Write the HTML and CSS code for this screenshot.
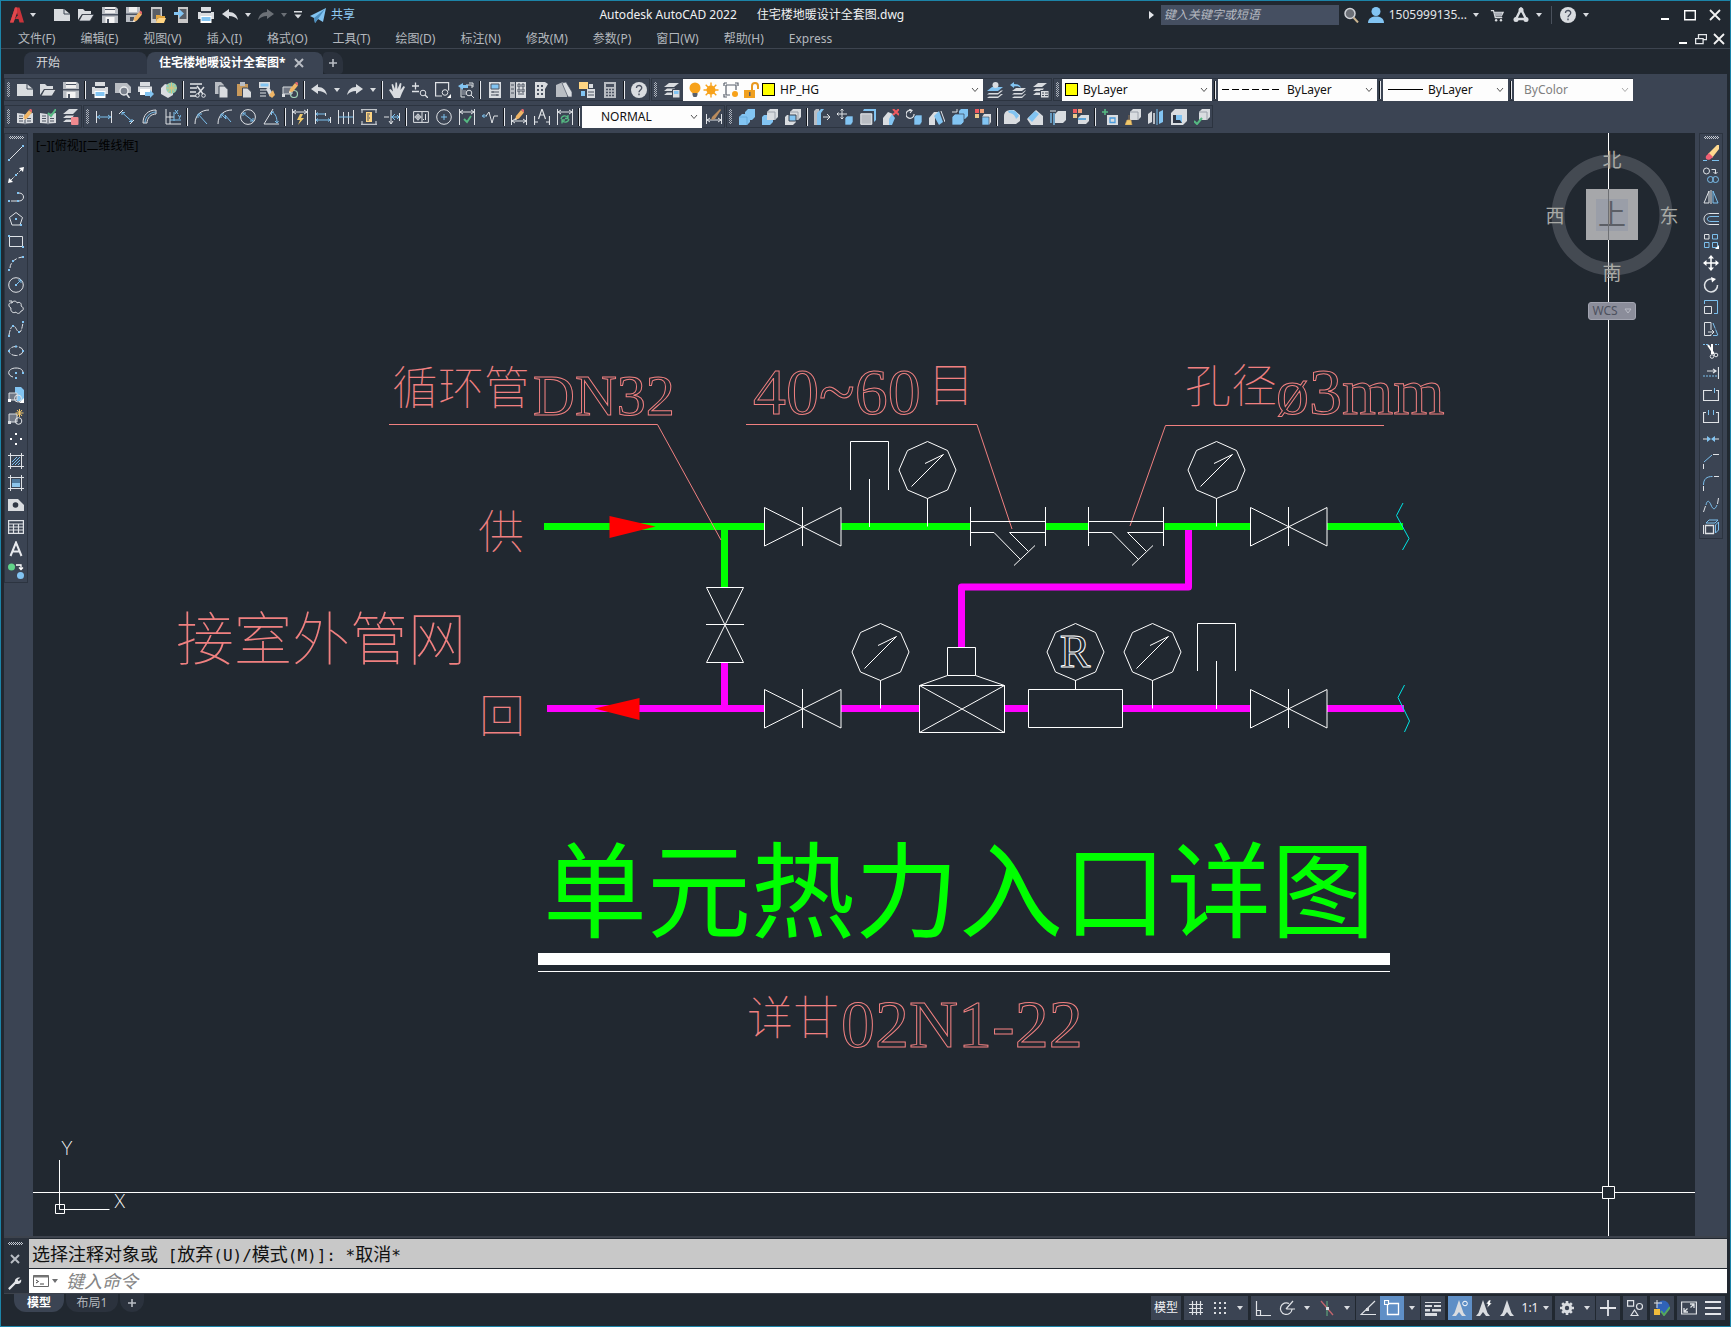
FILE: index.html
```html
<!DOCTYPE html>
<html lang="zh-CN">
<head>
<meta charset="utf-8">
<title>Autodesk AutoCAD 2022 - 住宅楼地暖设计全套图.dwg</title>
<link rel="stylesheet" href="styles.css">
</head>
<body>
<svg class="sprite" aria-hidden="true">
<symbol id="logo" viewBox="0 0 16 16"><path d="M1 15.500 6 .5h4.500L15 15.500h-4.500L9.500 12H6l2-3h.8L8 5.500 4.500 15.500z" fill="#c9343b"/><path d="M1 15.500h3.500L8 5.500V.5H6z" fill="#e0474c"/></symbol>
<symbol id="caret" viewBox="0 0 8 8"><path d="M1 2h6L4 6z" class="fw"/></symbol>
<symbol id="caretbar" viewBox="0 0 10 10"><path d="M1 1h8v1.500H1zM1.500 4.500h7L5 8.500z" class="fw"/></symbol>
<symbol id="chev" viewBox="0 0 8 8"><path d="M1 2l3 3.500L7 2" fill="none" stroke="#555"/></symbol>
<symbol id="new" viewBox="0 0 16 16"><path d="M0 2h10l6 5v7H0z" class="fw"/><path d="M10 2v5h6" stroke="#3b4453" fill="none"/></symbol>
<symbol id="open" viewBox="0 0 16 16"><path d="M0 13V2h5l2 2h6v3H4z" class="fw"/><path d="M4.500 7.500H16L12 14H1z" class="fw" stroke="#2b323d" stroke-width=".7"/></symbol>
<symbol id="save" viewBox="0 0 16 16"><path d="M0 0h14l2 2v14H0z" class="fs"/><path d="M3 0h10v6H3z" fill="#eee"/><path d="M3 2h10v1H3zM0 7h16v1.500H0z" fill="#4a5261"/><path d="M3.500 10h9v6h-9z" fill="#f4f4f4"/><path d="M5 12h2v4H5z" fill="#4a5261"/></symbol>
<symbol id="pencil" viewBox="0 0 16 16"><path d="M7 15l1-4 5-6 3 2.500-5 6z" fill="#f0b566"/><path d="M13 5l1.500-1.500L16 5v2.500z" fill="#e5666c"/><path d="M7 15l.6-2 1.400 1.200z" fill="#fff"/></symbol>
<symbol id="saveas" viewBox="0 0 16 16"><path d="M0 0h14v9l-5 6H0z" class="fs"/><path d="M3 0h8v5H3z" fill="#eee"/><path d="M0 6.500h14V8H0zM4 10h4v4H4z" fill="#4a5261"/><use href="#pencil"/></symbol>
<symbol id="openm" viewBox="0 0 16 16"><path d="M1 0h11v16H1z" fill="#c8c8c8"/><path d="M2.500 2h8v10h-8z" fill="#595e66"/><path d="M6 8h4l1 1h4v2H8l-2 4z" fill="#e2a63f"/><path d="M8.500 11H16l-2 5H6z" fill="#ffd583"/></symbol>
<symbol id="savem" viewBox="0 0 16 16"><path d="M4 0h10v16H4z" fill="#c8c8c8"/><path d="M5.500 2h7v10h-7z" fill="#595e66"/><path d="M0 5h5V2l5 4.500L5 11V8H0z" class="fb"/></symbol>
<symbol id="print" viewBox="0 0 16 16"><path d="M3 0h10v5H3zM0 5h16v7H0z" class="fw"/><path d="M3 4h10v2H3z" fill="#3b4453"/><path d="M2.500 9h11v7h-11z" fill="#fff"/><path d="M3.500 10h9v4h-9z" class="fb"/></symbol>
<symbol id="undo" viewBox="0 0 16 16"><path d="M0 7l7-5v3c5 0 8 3 9 8-3-3-5-4-9-4v3z" class="fw"/></symbol>
<symbol id="redo" viewBox="0 0 16 16"><path d="M16 7L9 2v3c-5 0-8 3-9 8 3-3 5-4 9-4v3z" class="fw"/></symbol>
<symbol id="plane" viewBox="0 0 16 16"><path d="M0 9L16 1l-3 14-5-3-3 4-1-5z" class="fb"/><path d="M4 11l11-9-7 10-3 4z" fill="#4c8fc0"/></symbol>
<symbol id="mag" viewBox="0 0 16 16"><circle cx="7" cy="6.500" r="5" fill="#6b6f76" stroke="#d0d3d8" stroke-width="1.500"/><path d="M10.500 10.500l4.500 5" stroke="#c9b38f" stroke-width="2"/></symbol>
<symbol id="user" viewBox="0 0 16 16"><circle cx="8" cy="4.500" r="4.500" class="fb"/><path d="M0 16c0-5 4-6.500 8-6.500s8 1.500 8 6.500z" class="fb"/></symbol>
<symbol id="cart" viewBox="0 0 16 16"><path d="M1 3h3l2 8h8M5 5h10l-2 4H6" fill="none" stroke="#d9dce0" stroke-width="1.400"/><path d="M5 5h9l-1 4H6z" fill="#a9adb5"/><circle cx="7" cy="14" r="1.400" class="fw"/><circle cx="12.500" cy="14" r="1.400" class="fw"/></symbol>
<symbol id="adsk" viewBox="0 0 16 16"><path d="M8 2l5 10H3z" fill="none" stroke="#d9dce0" stroke-width="2.400"/><circle cx="8" cy="3" r="2.500" class="fw"/><circle cx="3" cy="12.500" r="2.500" class="fw"/><circle cx="13" cy="12.500" r="2.500" class="fw"/></symbol>
<symbol id="help" viewBox="0 0 16 16"><circle cx="8" cy="8" r="8" class="fw"/><path d="M5.500 6c0-3.500 5.500-3.200 5.200 0C10.500 8 8 8 8 10.300M8 11.500v1.700" fill="none" stroke="#4a5160" stroke-width="1.400"/></symbol>
<symbol id="min" viewBox="0 0 12 12"><path d="M2 9h8v2H2z" fill="#fff"/></symbol>
<symbol id="max" viewBox="0 0 12 12"><path d="M.7 1.700h10.600v9H.7z" fill="none" stroke="#fff" stroke-width="1.400"/></symbol>
<symbol id="restore" viewBox="0 0 12 12"><path d="M.6 5.600h7.500v5H.6zM3.500 5V1.600h8v5H8.500" fill="none" stroke="#e4e6e9" stroke-width="1.300"/></symbol>
<symbol id="close" viewBox="0 0 12 12"><path d="M1 1l10 10M11 1L1 11" stroke="#f2f2f2" stroke-width="1.800"/></symbol>
<symbol id="x" viewBox="0 0 10 10"><path d="M1 1l8 8M9 1L1 9" stroke="#b9bdc4" stroke-width="2"/></symbol>
<symbol id="plus" viewBox="0 0 10 10"><path d="M5 1v8M1 5h8" stroke="#b9bdc4" stroke-width="1.600"/></symbol>

<symbol id="preview" viewBox="0 0 16 16"><path d="M0 1h12l4 4v6H0z" class="fs"/><circle cx="9" cy="9" r="4" fill="#79808c" stroke="#eceef0" stroke-width="1.300"/><path d="M11.500 12l3 4" class="w" stroke-width="1.600"/></symbol>
<symbol id="publish" viewBox="0 0 16 16"><path d="M2 0h10v4H2zM0 4.500h14V10H0z" class="fw"/><path d="M2 7h10v6H2z" fill="#fff"/><path d="M7 10h5V8l4 4-4 4v-2H7z" class="fb"/></symbol>
<symbol id="globe" viewBox="0 0 16 16"><path d="M0 6l4-4 8 2v9l-5 3-7-4z" class="fw"/><circle cx="10.500" cy="6" r="5.500" fill="#8ccfb4"/><path d="M10.500 .5v11M5 6h11M7 2c3 3 3 5 0 8M14 2c-3 3-3 5 0 8" fill="none" stroke="#e0c27a" stroke-width=".9"/></symbol>
<symbol id="cut" viewBox="0 0 16 16"><path d="M0 1h12v2H0zM0 5h7v2H0zM0 9h6v2H0zM0 13h6v2H0z" class="fs"/><path d="M7 4l6 8M14 5l-6 7" class="w" stroke-width="1.500"/><circle cx="7.500" cy="13.500" r="1.800" class="w"/><circle cx="13.500" cy="13.500" r="1.800" class="w"/></symbol>
<symbol id="copy" viewBox="0 0 16 16"><path d="M2 0h6l3 3v9H2z" class="fs"/><path d="M6 4h5.500L15 7.500V16H6z" class="fw" stroke="#3b4453"/></symbol>
<symbol id="paste" viewBox="0 0 16 16"><path d="M1 2h11v12H1z" fill="#c99a5b"/><path d="M4 0h5v4H4z" class="fs"/><path d="M6.500 6h5l4 4v6h-9z" class="fw" stroke="#3b4453"/></symbol>
<symbol id="match" viewBox="0 0 16 16"><path d="M0 0h11v6H0z" class="fw"/><path d="M1.500 1.500h8v3h-8z" class="fb"/><path d="M1 8h7M1 11h6M1 14h6" class="w"/><path d="M7 7l3-2 4 7-3 3z" class="fw"/><path d="M10 13l4-5 2 5-3 3z" fill="#f0b566"/></symbol>
<symbol id="bedit" viewBox="0 0 16 16"><path d="M1 5h9v7H1z" fill="#717885" stroke="#d9dce0"/><circle cx="12" cy="12" r="3.500" fill="none" stroke="#9fd0b5" stroke-width="1.200"/><path d="M0 12h3v3H0z" class="fw"/><g transform="translate(0 -4)"><use href="#pencil"/></g></symbol>
<symbol id="hand" viewBox="0 0 16 16"><path d="M5 16L0 8l1.500-1L4 9.500 2.500 2.500 4 2l2 5L6.500 .5H8L8.500 7 11 1l1.500.5-1 6.500L14.500 4l1.500 1-3 6-2 5z" class="fw"/></symbol>
<symbol id="zoomrt" viewBox="0 0 16 16"><path d="M0 4h7M3.500 .5v7M0 9.500h7" class="w" stroke-width="1.300"/><circle cx="11" cy="11" r="2.800" class="w"/><path d="M13 13l3 3" class="w" stroke-width="1.300"/></symbol>
<symbol id="zoomw" viewBox="0 0 16 16"><path d="M7 14H.6V.6h13v8" class="w" stroke-width="1.200"/><circle cx="10" cy="10.500" r="2.800" class="w"/><path d="M16 12v4h-4z" fill="#fff"/></symbol>
<symbol id="zoomp" viewBox="0 0 16 16"><path d="M3 6v9h4M8 3h6v3" class="w"/><path d="M0 4l5-3v2h5v3H5v2z" class="fb"/><path d="M4 8h4v5H4z" fill="#717885"/><circle cx="11" cy="11" r="2.800" class="w"/><path d="M13 13l3 3M11 1h4v4" class="w"/></symbol>
<symbol id="props" viewBox="0 0 16 16"><path d="M2 0h12v16H2z" class="fw"/><path d="M4 2h8v5H4z" class="fb" stroke="#4a5261"/><path d="M4 10h8M4 13h8M6 9v2M10 12v2" stroke="#4a5261"/></symbol>
<symbol id="dcenter" viewBox="0 0 16 16"><path d="M0 0h5v16H0z" class="fs"/><path d="M6 0h10v16H6z" class="fw"/><path d="M8 2h2v3H8zM12 2h2v3h-2zM8 7h2v3H8zM12 7h2v3h-2zM8 12h6M1 3h3M1 7h3M1 11h3" class="d"/></symbol>
<symbol id="palette" viewBox="0 0 16 16"><path d="M2 0h10l3 2-3 5v9H2z" class="fw"/><path d="M4 3h2v2H4zM8 3h2v2H8zM4 7h2v2H4zM8 7h2v2H8zM4 11h2v2H4zM8 11h2v2H8z" fill="#4a5261"/></symbol>
<symbol id="sheets" viewBox="0 0 16 16"><path d="M0 3l7-3 4 11v4H0z" class="fs"/><path d="M6 1l4-1 6 10v5h-4z" class="fw" stroke="#4a5261" stroke-width=".7"/></symbol>
<symbol id="markup" viewBox="0 0 16 16"><path d="M0 0h9v7H0z" fill="#ffd583"/><path d="M2 9h4v5H2z" class="fb"/><path d="M8 7h8v9H8zM10 2h4v4h-4z" class="fw"/><path d="M9 10h6M9 13h6" class="d"/></symbol>
<symbol id="calc" viewBox="0 0 16 16"><path d="M2 0h12v16H2z" class="fs"/><path d="M4 2h8v3H4z" fill="#4a5261"/><path d="M4 7.500h8M4 10.500h8M4 13.500h8" stroke="#4a5261" stroke-width="1.600" stroke-dasharray="2 1"/></symbol>
<symbol id="layers" viewBox="0 0 16 16"><path d="M0 5l5-4h10l-5 4zM0 9l3-2.500h8L9 9zM0 13l3-2.500h5V13z" class="fw"/><path d="M8.500 7.500H16V16H8.500z" class="fw" stroke="#3b4453"/><path d="M10 9h4.500v3H10z" class="fb"/></symbol>
<symbol id="bulb" viewBox="0 0 16 16"><circle cx="8" cy="6" r="5.500" fill="#f7a21b"/><path d="M5.500 11h5v2l-1 2h-3l-1-2z" fill="#59606c"/></symbol>
<symbol id="sun" viewBox="0 0 16 16"><circle cx="8" cy="8" r="4.500" fill="#f7a21b"/><path d="M8 .5v15M.5 8h15M2.700 2.700l10.600 10.600M13.300 2.700L2.700 13.300" stroke="#f7a21b" stroke-width="1.400"/></symbol>
<symbol id="vpfrz" viewBox="0 0 16 16"><path d="M3 3h10v5M3 3v10h4M1 1h3M1 1v3M12 1h3v3M1 12v3h3" fill="none" stroke="#59606c" stroke-width="1.200"/><circle cx="12" cy="12" r="3" fill="#f7a21b"/></symbol>
<symbol id="unlock" viewBox="0 0 16 16"><path d="M9 8V4c0-4 6-4 6 0v3" fill="none" stroke="#e8981e" stroke-width="2"/><path d="M1 8h11v8H1z" fill="#f0a020"/><path d="M6 10h1.500v4H6z" fill="#59606c"/></symbol>
<symbol id="laycur" viewBox="0 0 16 16"><path d="M0 9l5-4h11l-5 4z" class="fb"/><path d="M0 12.500l2-1.500h9l3-2.500h2l-5 4zM0 16l2-1.500h9l3-2.500h2L11 16z" class="fw"/><circle cx="8.500" cy="3" r="3" class="fw"/></symbol>
<symbol id="layprev" viewBox="0 0 16 16"><path d="M2 9l4-3h10l-4 3zM2 12.500l2-1.500h8l3-2.500h1l-4 4zM2 16l2-1.500h8l3-2.500h1l-4 4z" class="fw"/><path d="M0 3l4-3v2c4 0 6 1 7 4-2-2-4-2-7-1.500V6z" class="fb"/></symbol>
<symbol id="laystate" viewBox="0 0 16 16"><path d="M0 5l5-4h9l-5 4zM0 9l3-2.500h8L9 9zM0 13l3-2.500h4V13z" class="fw"/><path d="M7.500 8.500H16V16H7.500z" class="fw" stroke="#3b4453"/><path d="M9 11h2M12 11h3M9 13.500h2M12 13.500h3" class="d"/></symbol>

<symbol id="book" viewBox="0 0 16 16"><path d="M0 4l7 1 1 1 1-1 7-1v10l-7 .5-1 1-1-1-7-.5z" class="fw"/><path d="M8 6v9M2 7h4M2 9.500h4M2 12h4M10 9.500h4M10 12h4" class="d"/></symbol>
<symbol id="bookedit" viewBox="0 0 16 16"><use href="#book"/><g transform="translate(-1 -4)"><use href="#pencil"/></g></symbol>
<symbol id="bookok" viewBox="0 0 16 16"><use href="#book"/><path d="M8 4l3 3 5-7" fill="none" stroke="#55b982" stroke-width="2"/></symbol>
<symbol id="layerdel" viewBox="0 0 16 16"><path d="M0 5l6-5h9l-5 5zM0 9l3-2.500h8L9 9zM0 13l3-2.500h5V13z" class="fw"/><rect x="8" y="8" width="7.500" height="8" rx="1" fill="#f08a8f"/></symbol>
<symbol id="dlin" viewBox="0 0 16 16"><path d="M.5 2v12M15.500 2v12" class="w"/><path d="M1 8h14M4 6L1.500 8 4 10M12 6l2.500 2-2.500 2" class="b"/></symbol>
<symbol id="dali" viewBox="0 0 16 16"><path d="M0 5l4-4M11 15l4-4" class="w"/><path d="M3 3.500l10 9M3 6V3.500h3M13 10v2.500h-3" class="b"/></symbol>
<symbol id="darc" viewBox="0 0 16 16"><path d="M5 14C5 9 9 5 14 5V1C6 1 1 6 1 14z" class="w"/><path d="M3 14C3 8 8 3 14 3" class="b"/></symbol>
<symbol id="dord" viewBox="0 0 16 16"><path d="M1 0v15h15M1 8h8M5 3v12" class="w"/><path d="M5 11h11M9 3v9M10 1l3 4M13 1l-3 4M13 6l1.500 2M16 6l-2 4" class="b"/></symbol>
<symbol id="drad" viewBox="0 0 16 16"><path d="M15 1C7 1 1 6 1 15" class="w"/><path d="M4 5l9 10M4 9V5h4" class="b"/></symbol>
<symbol id="djog" viewBox="0 0 16 16"><path d="M15 1C7 1 1 6 1 15" class="w"/><path d="M4 5l5 5-1-4 6 7M4 9V5h3" class="b"/></symbol>
<symbol id="ddia" viewBox="0 0 16 16"><circle cx="8" cy="8" r="7.400" class="w"/><path d="M3 4l10 8M3 7V4h3M13 9v3h-3" class="b"/></symbol>
<symbol id="dang" viewBox="0 0 16 16"><path d="M10 0L1 15h15" class="w"/><path d="M9 3c4 2 5 6 5 11M12 12l2 2 1.500-2M11 3H8.500v3" class="b"/></symbol>
<symbol id="dquick" viewBox="0 0 16 16"><path d="M.5 0v16M15.500 0v16M1 3h14M4 1L1 3l3 2M12 1l3 2-3 2" class="w"/><path d="M8 5L5 11h3l-2 5 6-7H9l2-4z" fill="#f0c96a"/></symbol>
<symbol id="dbase" viewBox="0 0 16 16"><path d="M.5 1v14M10.500 4v3M15.500 8v6" class="w"/><path d="M1 5h9M1 11h14M3 3.500L1 5l2 1.500M3 9.500L1 11l2 1.500M13 9.500l2 1.500-2 1.500" class="b"/></symbol>
<symbol id="dcont" viewBox="0 0 16 16"><path d="M.5 1v14M5.500 3v12M10.500 3v12M15.500 1v14" class="w"/><path d="M1 8h14" class="b"/></symbol>
<symbol id="dspace" viewBox="0 0 16 16"><path d="M0 .7h16M0 15.300h16M1 4V1M15 4V1M1 12v3M15 12v3" class="w"/><path d="M5 3h6v10H5z" fill="#ffd583"/><path d="M6 5h3M6 7h2M6 9h3M6 11h2" stroke="#4a5261"/></symbol>
<symbol id="dbreak" viewBox="0 0 16 16"><path d="M0 8h5M7 1v14M5 12l2 3 2-3M15.500 4v8" class="w"/><path d="M7 8h8M11 5l-3 3 3 3M13 6l2 2-2 2" class="b"/></symbol>
<symbol id="tol" viewBox="0 0 16 16"><path d="M.6 2.600h14.800v10.800H.6zM9 3v10" class="w"/><circle cx="5" cy="8" r="2.300" class="w"/><path d="M5 4.500v7M1.500 8h7M12.500 5v6M10.500 10v1" class="w"/></symbol>
<symbol id="cmark" viewBox="0 0 16 16"><circle cx="8" cy="8" r="7.300" class="w"/><path d="M8 5v6M5 8h6" class="b"/></symbol>
<symbol id="dinsp" viewBox="0 0 16 16"><path d="M.5 0v16M15.500 0v16M1 3h14M4 1L1 3l3 2M12 1l3 2-3 2" class="w"/><path d="M5 10l3 3 4-6" fill="none" stroke="#55b982" stroke-width="1.800"/></symbol>
<symbol id="jogl" viewBox="0 0 16 16"><path d="M0 7h5M2.500 5L.5 7l2 2" class="b"/><path d="M4 7l3-4 3 11 2-7h4" class="w"/></symbol>
<symbol id="dedit" viewBox="0 0 16 16"><path d="M.5 6v10M15.500 6v10M1 12h14M4 10l-3 2 3 2M12 10l3 2-3 2" class="w"/><g transform="translate(-3 -4)"><use href="#pencil"/></g></symbol>
<symbol id="dtext" viewBox="0 0 16 16"><path d="M.5 7v9M15.500 7v9M1 13h3M12 13h3M4.500 10L8 0l3.500 10M6 6h4" class="w" stroke-width="1.200"/></symbol>
<symbol id="dupd" viewBox="0 0 16 16"><path d="M.5 0v16M15.500 0v16M1 3h14M4 1L1 3l3 2M12 1l3 2-3 2" class="w"/><path d="M4 10c1-4 6-4 7-1M12 10c-1 4-6 4-7 1M11 6v3.500H8M5 14.500V11h3" fill="none" stroke="#55b982" stroke-width="1.300"/></symbol>
<symbol id="dstyle" viewBox="0 0 16 16"><path d="M.5 5v10M15.500 5v10M1 11h14M4 9l-3 2 3 2M12 9l3 2-3 2" class="w"/><path d="M6 8l8-8 1 1-6 9-4 1z" fill="#b98b5d"/></symbol>

<symbol id="cubeg" viewBox="0 0 16 16"><path d="M5 3l3-3h8v8l-3 3H5z" class="fw"/><path d="M5 3h8v8" fill="none" stroke="#9aa0aa"/></symbol>
<symbol id="union" viewBox="0 0 16 16"><path d="M0 8l3-3h3V3l3-3h7v8l-3 3h-2v2l-3 3H0z" class="fb"/><path d="M0 8h8v8" fill="none" stroke="#5fa4d6" stroke-width=".8"/></symbol>
<symbol id="subtract" viewBox="0 0 16 16"><use href="#cubeg"/><path d="M0 8l2-2h3v5h6v2l-3 3H0z" class="fb"/></symbol>
<symbol id="intersect" viewBox="0 0 16 16"><use href="#cubeg"/><path d="M0 8l2-2h9v7l-3 3H0z" class="fw"/><path d="M4 6h7v6H4z" class="fb" stroke="#3b4453"/></symbol>
<symbol id="extrudef" viewBox="0 0 16 16"><path d="M0 2l2-2h3v14l-2 2H0z" class="fs"/><path d="M3 4l4-4h3L7 4v12H3z" class="fb"/><path d="M9 8h7M13 5l3 3-3 3" class="w"/></symbol>
<symbol id="movef" viewBox="0 0 16 16"><path d="M5 0v10M0 5h10M3.500 1.500L5 0l1.500 1.500M3.500 8.500L5 10l1.500-1.500M1.500 3.500L0 5l1.500 1.500" class="w"/><path d="M8 9l2-2h6v6l-2 3H8z" class="fb" stroke="#3b4453" stroke-width=".6"/></symbol>
<symbol id="offsetf" viewBox="0 0 16 16"><path d="M4 0h12v11l-2 2V2H3z" class="fb"/><path d="M.8 4.800h11v10.500H.8z" class="fs" stroke="#eceef0"/></symbol>
<symbol id="delf" viewBox="0 0 16 16"><path d="M0 16V9l5-6 5 2-4 6v5z" class="fw"/><path d="M6 10l3-5 3 4-3 7H6z" class="fb"/><path d="M10 0l6 6M16 0l-6 6" stroke="#ef5a60" stroke-width="2"/></symbol>
<symbol id="rotf" viewBox="0 0 16 16"><path d="M8 5A4 4 0 1 1 5 1.500M3 0l3 1.500L4 4" class="w" stroke-width="1.200"/><path d="M8 8l2-2h6v7l-2 3H8z" class="fb" stroke="#3b4453" stroke-width=".6"/></symbol>
<symbol id="taperf" viewBox="0 0 16 16"><path d="M0 16V9l5-6h5L6 9v7z" class="fw"/><path d="M5 7l5-5 4 11-4 3z" class="fb"/><path d="M12 2l4 11" class="w"/></symbol>
<symbol id="copyf" viewBox="0 0 16 16"><path d="M7 2l2-2h7v7l-3 3H7z" class="fb"/><path d="M0 8l3-3h9v8l-3 3H0z" class="fb" stroke="#3b4453" stroke-width=".7"/><path d="M0 3h5V0" class="w"/></symbol>
<symbol id="colorf" viewBox="0 0 16 16"><path d="M0 0h4v4H0z" fill="#ef5a60"/><path d="M5 0h4v4H5z" fill="#efa079"/><path d="M0 5h4v4H0z" fill="#e9c98b"/><path d="M7 8l2-3h7v8l-2 3H7z" class="fw"/><path d="M7 8h7v8H7z" class="fb" stroke="#3b4453" stroke-width=".6"/></symbol>
<symbol id="fillete" viewBox="0 0 16 16"><path d="M0 15V7c0-4 3-6 7-6h3l6 5v6l-4 3z" class="fw"/><path d="M4 2c5-2 9 1 11 5l-3 3C11 6 8 4 5 4z" class="fb"/></symbol>
<symbol id="chamfe" viewBox="0 0 16 16"><path d="M0 10L9 1l7 6v9H4z" class="fw"/><path d="M1 9l7-7 4 3-7 8z" class="fb"/></symbol>
<symbol id="copye" viewBox="0 0 16 16"><path d="M5 5l3-3h8v9l-3 3H5z" class="fw"/><path d="M4 4v12M1 4v10" class="b" stroke-width="1.400"/><path d="M0 2h6" class="w"/></symbol>
<symbol id="colore" viewBox="0 0 16 16"><path d="M0 0h4v4H0z" fill="#ef5a60"/><path d="M5 0h4v4H5z" fill="#efa079"/><path d="M0 5h4v4H0z" fill="#e9c98b"/><path d="M5 9l3-3h8v6l-3 3H5z" class="fw"/><path d="M5 10h8" stroke="#5fa4d6" stroke-width="2"/></symbol>
<symbol id="imprint" viewBox="0 0 16 16"><path d="M3 0v6M0 3h6" stroke="#55b982" stroke-width="1.600"/><path d="M5 6h11v10H5z" class="fw"/><path d="M8 9h5v4.500H8z" class="fw" stroke="#4a9bdc" stroke-width="1.300"/></symbol>
<symbol id="clean" viewBox="0 0 16 16"><use href="#cubeg"/><path d="M4 6v5M0 16l2-5h4l1 5z" fill="#f0c96a" stroke="#c99a5b" stroke-width=".6"/></symbol>
<symbol id="separate" viewBox="0 0 16 16"><path d="M0 5l4-3v11l-4 2z" class="fw"/><path d="M11 3l4-2v12l-4 2z" class="fb"/><path d="M5 4h2v11H5z" class="fs"/><path d="M9 0v16" class="b"/></symbol>
<symbol id="shell" viewBox="0 0 16 16"><path d="M0 4l4-4h12v12l-4 4H0z" class="fw"/><path d="M2 6h9v8H2z" fill="#2f3745"/><path d="M5 6h6v8l-2-3H5z" class="fb"/></symbol>
<symbol id="check3d" viewBox="0 0 16 16"><use href="#cubeg"/><path d="M0 12l3 3 5-6" fill="none" stroke="#55b982" stroke-width="2"/></symbol>

<symbol id="line" viewBox="0 0 16 16"><path d="M1.500 14.500l13-13" class="w"/><path d="M0 14h2v2H0zM14 0h2v2h-2z" class="fb"/></symbol>
<symbol id="xline" viewBox="0 0 16 16"><path d="M2 14L14 2" class="w" stroke-dasharray="5 1.500"/><path d="M0 16l1-5 4 4zM16 0l-5 1 4 4z" fill="#fff"/><path d="M7 7h2v2H7z" class="fb"/></symbol>
<symbol id="pline" viewBox="0 0 16 16"><path d="M3 12h6M11 4c6 0 6 8 0 8" class="w"/><path d="M0 11h2v2H0zM9 11h2v2H9zM9 3h2v2H9z" class="fb"/></symbol>
<symbol id="polygon" viewBox="0 0 16 16"><path d="M8 1.500l6.500 5L12 14H4L1.500 6.500z" class="w"/><path d="M7 7h2v2H7zM12 13h2v2h-2z" class="fb"/></symbol>
<symbol id="rect" viewBox="0 0 16 16"><path d="M1.500 3.500h13v10h-13z" class="w"/><path d="M0 2h2v2H0zM14 13h2v2h-2z" class="fb"/></symbol>
<symbol id="arc" viewBox="0 0 16 16"><path d="M2 13c0-5 5-10 12-11" class="w" stroke-dasharray="5 2"/><path d="M0 14h2v2H0zM4 5h2v2H4zM14 1h2v2h-2z" class="fb"/></symbol>
<symbol id="circle" viewBox="0 0 16 16"><circle cx="8" cy="8" r="7.300" class="w"/><path d="M9 7l4-4M10 3h3v3" class="b"/><path d="M7 7h2v2H7z" class="fb"/></symbol>
<symbol id="cloud" viewBox="0 0 16 16"><path d="M3 9C0 8 0 3 4 4c1-3 5-2 5 0 3-2 5 1 4 3 3 1 3 5 0 5-1 3-4 3-5 1-3 2-6-1-5-4zM1 2h3v2" class="w"/></symbol>
<symbol id="spline" viewBox="0 0 16 16"><path d="M1 14C2 8 4 4 6 5s4 8 6 6 2-5 3-9" class="w" stroke-dasharray="5 1"/><path d="M0 14h2v2H0zM4 4h2v2H4zM10 10h2v2h-2zM14 0h2v2h-2z" class="fb"/></symbol>
<symbol id="ellipse" viewBox="0 0 16 16"><ellipse cx="8" cy="8" rx="7" ry="4.500" class="w" stroke-dasharray="6 1.500"/><path d="M0 7h2v2H0zM14 7h2v2h-2zM7 2.500h2v2H7z" class="fb"/></symbol>
<symbol id="ellarc" viewBox="0 0 16 16"><path d="M5 12C-2 10 0 3 8 3c5 0 7 2 7 5" class="w"/><path d="M7 7h2v2H7zM7 12h2v2H7zM14 7h2v2h-2z" class="fb"/></symbol>
<symbol id="insert" viewBox="0 0 16 16"><path d="M7 0h6l3 3v11H9V8H7z" class="fb"/><path d="M1 6h8v7H1z" fill="#717885" stroke="#d9dce0"/><circle cx="10" cy="11.500" r="3.500" class="w"/><path d="M0 12h3v3H0zM16 11v5h-5z" fill="#fff"/></symbol>
<symbol id="block" viewBox="0 0 16 16"><path d="M1 5h8v8H1z" fill="#717885" stroke="#d9dce0"/><circle cx="10.500" cy="12" r="3.300" class="w"/><path d="M0 12h3v3H0z" class="fw"/><path d="M11.500 0v8M7.500 4h8M9 1l5 6M14 1L9 7" stroke="#f5c96d"/></symbol>
<symbol id="point" viewBox="0 0 16 16"><path d="M7 2h2v2H7zM2 7h2v2H2zM12 7h2v2h-2zM7 12h2v2H7z" fill="#fff"/></symbol>
<symbol id="hatch" viewBox="0 0 16 16"><path d="M2.500 0v16M13.500 0v16M0 2.500h16M0 13.500h16" class="w"/><path d="M4 9l5-5M4 12l8-8M7 12l5-5M10 12l2-2" class="b"/></symbol>
<symbol id="gradient" viewBox="0 0 16 16"><path d="M4 4h8v4H4z" fill="#4f799c"/><path d="M4 8h8v4H4z" fill="#8cc4ea"/><path d="M2.500 0v16M13.500 0v16M0 2.500h16M0 13.500h16" class="w"/></symbol>
<symbol id="region" viewBox="0 0 16 16"><path d="M0 2h10l6 6v6H0z" class="fw"/><circle cx="7.500" cy="8" r="2.800" fill="#2f3745"/></symbol>
<symbol id="table" viewBox="0 0 16 16"><path d="M.6 1.600h14.800v12.800H.6zM1 5h14M1 8h14M1 11h14M5.500 5v9M10.500 5v9" class="w" stroke-width="1.200"/></symbol>
<symbol id="mtext" viewBox="0 0 16 16"><path d="M2.500 15L8 1.500 13.500 15M4.500 10.500h7" fill="none" stroke="#e8eaee" stroke-width="2"/></symbol>
<symbol id="addsel" viewBox="0 0 16 16"><circle cx="3.500" cy="4" r="3.500" fill="#62d58a"/><circle cx="12.500" cy="12.500" r="3.500" class="fb"/><path d="M8 2h5v4M11 4.500l2 2 2-2" stroke="#fff" fill="none" stroke-width="1.300"/></symbol>

<symbol id="erase" viewBox="0 0 16 16"><path d="M5 9l9-9h2v4l-7 9z" fill="#ffd98f"/><path d="M3 11l3-3 4 4-3 2.500c-3 1-5-.5-4-3.500z" fill="#ef5f74"/><path d="M0 15.500h4M9 15.500h7" class="b"/></symbol>
<symbol id="copyobj" viewBox="0 0 16 16"><circle cx="3.500" cy="4" r="3" class="w"/><circle cx="7.500" cy="12.500" r="3" class="b"/><circle cx="12.500" cy="12.500" r="3" class="b"/><path d="M8.500 2.500h4v4M10.500 5l2 2 2-2" class="w"/></symbol>
<symbol id="mirror" viewBox="0 0 16 16"><path d="M6 2v12H1z" class="w"/><path d="M10 2v12h5z" class="b"/><path d="M8 1v14" class="w"/></symbol>
<symbol id="offset" viewBox="0 0 16 16"><path d="M16 2.500H7c-8 0-8 11 0 11h9" class="w"/><path d="M16 5.500H8c-5 0-5 5 0 5h8" class="b"/></symbol>
<symbol id="array" viewBox="0 0 16 16"><path d="M1.500 1.500h4.500v4.500H1.500z" class="w"/><path d="M9.500 1.500h5v4.500h-5zM1.500 9.500h4.500v5H1.500zM9.500 9.500h5v5h-5z" class="b"/><path d="M16 12v4h-4z" fill="#fff"/></symbol>
<symbol id="move" viewBox="0 0 16 16"><path d="M8 1v14M1 8h14" stroke="#fff" stroke-width="1.500"/><path d="M8 0l3 3.500H5zM8 16l3-3.500H5zM0 8l3.500-3v6zM16 8l-3.500-3v6z" fill="#fff"/></symbol>
<symbol id="rotate" viewBox="0 0 16 16"><path d="M9 2A6.500 6.500 0 1 0 14.500 8" class="w" stroke-width="1.500"/><path d="M8 0l5 2-4 3.500z" fill="#fff"/></symbol>
<symbol id="scale" viewBox="0 0 16 16"><path d="M1.500 7.500h7v7h-7z" class="w"/><path d="M1.500 5V1.500h13v13H11" class="b"/></symbol>
<symbol id="stretch" viewBox="0 0 16 16"><path d="M8 9V1.500H1.500v13H8V13M5 11h6M9 9l2 2-2 2" class="w"/><path d="M10 2l5 12.500h-5" class="b" stroke-dasharray="6 1"/></symbol>
<symbol id="trim" viewBox="0 0 16 16"><path d="M0 1.500h5M12 1.500h4" class="b" stroke-dasharray="2 1"/><path d="M5 2l6 9M9 1l0 10" stroke="#fff" stroke-width="2"/><circle cx="9" cy="13.500" r="1.800" class="w"/><circle cx="13" cy="12" r="1.800" class="w"/></symbol>
<symbol id="extend" viewBox="0 0 16 16"><path d="M15.500 2v12M4 6h9M10 4l3 2-3 2" class="w" stroke-width="1.200"/><path d="M0 11h14" class="b" stroke-dasharray="2 1"/></symbol>
<symbol id="breakpt" viewBox="0 0 16 16"><path d="M9 3.500H.5v10h15v-10H13" class="w" stroke-width="1.200"/><path d="M11.500 1v5" class="b"/></symbol>
<symbol id="break" viewBox="0 0 16 16"><path d="M3 3.500H.5v10h15v-10H13" class="w" stroke-width="1.200"/><path d="M5.500 1v5M10.500 1v5" class="b"/></symbol>
<symbol id="join" viewBox="0 0 16 16"><path d="M0 8h5M11 8h5" class="w"/><path d="M4 5l4 3-4 3zM12 5L8 8l4 3z" class="fb"/></symbol>
<symbol id="chamfer" viewBox="0 0 16 16"><path d="M.5 16v-5M10 1.500h6" class="w"/><path d="M1 9l8-7" class="b"/></symbol>
<symbol id="fillet" viewBox="0 0 16 16"><path d="M.5 16v-5M11 1.500h5" class="w"/><path d="M.5 10c0-6 3-8.500 9-8.500" class="b"/></symbol>
<symbol id="blend" viewBox="0 0 16 16"><path d="M.5 15l2-6M15.500 1l-1 6" class="w"/><path d="M3 8c1-5 3-5 5 0s4 5 6 0" class="b"/></symbol>
<symbol id="explode" viewBox="0 0 16 16"><path d="M2.500 6.500h8v8h-8z" class="w" stroke-width="1.300"/><path d="M3 4l3-3h9l-3 3zM12.500 6l3-3v8l-3 3z" class="b"/><path d="M.5 6v9" class="w"/></symbol>

<symbol id="wrench" viewBox="0 0 16 16"><path d="M1 15l8-8" stroke="#e4e6ea" stroke-width="2.500"/><path d="M8 8c-1-4 2-7 6-6l-3 2 1 2 3-2c1 4-3 6-6 5z" fill="#e4e6ea"/></symbol>
<symbol id="prompt" viewBox="0 0 16 12"><path d="M.5 .5h15v11H.5z" fill="#fff" stroke="#666"/><path d="M.5 .5h15v2H.5z" fill="#777"/><path d="M3 5l2.500 1.500L3 8M7 9h4" fill="none" stroke="#444"/></symbol>
<symbol id="grid" viewBox="0 0 16 16"><path d="M4.500 1v14M8.500 1v14M12.500 1v14M1 4.500h14M1 8.500h14M1 12.500h14" class="w" stroke-width="1.200"/></symbol>
<symbol id="snap" viewBox="0 0 16 16"><path d="M2 2h2v2H2zM7 2h2v2H7zM12 2h2v2h-2zM2 7h2v2H2zM7 7h2v2H7zM12 7h2v2h-2zM2 12h2v2H2zM7 12h2v2H7zM12 12h2v2h-2z" class="fw"/></symbol>
<symbol id="ortho" viewBox="0 0 16 16"><path d="M1.500 1v14.500H16M1.500 10.500h4v5" class="w" stroke-width="1.200"/></symbol>
<symbol id="polar" viewBox="0 0 16 16"><path d="M13 9.500A5.800 5.800 0 1 1 10 3.500M7 9h9M7 9l7-8" class="w" stroke-width="1.200"/></symbol>
<symbol id="iso" viewBox="0 0 16 16"><path d="M8 1v15" stroke="#65b383"/><path d="M2 1l12 14" stroke="#c2656d" stroke-width="1.300"/><path d="M7 7h3v3H7z" class="fw"/></symbol>
<symbol id="otrack" viewBox="0 0 16 16"><path d="M15 1L1 14.500h15" class="w" stroke-width="1.200"/><path d="M6 8h3v3H6z" class="fw"/></symbol>
<symbol id="osnap" viewBox="0 0 16 16"><path d="M3 3.500h11.500v11H3.500V3" fill="none" stroke="#fff" stroke-width="1.300"/><path d="M.5 .5h4v4h-4z" fill="#6492c4" stroke="#fff" stroke-width="1.200"/></symbol>
<symbol id="lweight" viewBox="0 0 16 16"><path d="M0 2h16v1H0zM0 5h7v2H0zM9 5h7v2H9zM0 9h5v2.500H0zM7 9h9v2.500H7zM0 13h12v3H0z" class="fw"/></symbol>
<symbol id="anno" viewBox="0 0 16 16"><path d="M7 0l4.500 13 2.500 3h-4L7 12l-3 4H0l2.500-3z" class="fw"/></symbol>
<symbol id="annovis" viewBox="0 0 16 16"><use href="#anno"/><circle cx="13" cy="3.500" r="2.300" fill="none" stroke="#fff"/></symbol>
<symbol id="annoauto" viewBox="0 0 16 16"><use href="#anno"/><path d="M13 0l-3 4h2l-1 4 5-5h-2l1-3z" fill="#fff" stroke="#3b4453" stroke-width=".5"/></symbol>
<symbol id="gear" viewBox="0 0 16 16"><circle cx="8" cy="8" r="4.200" fill="none" stroke="#d9dce0" stroke-width="3.400"/><path d="M8 0v3M8 13v3M0 8h3M13 8h3M2.500 2.500l2 2M11.500 11.500l2 2M13.500 2.500l-2 2M4.500 11.500l-2 2" stroke="#d9dce0" stroke-width="3"/></symbol>
<symbol id="monitor" viewBox="0 0 16 16"><path d="M8 0v16M0 8h16" stroke="#e4e6ea" stroke-width="1.800"/></symbol>
<symbol id="isolate" viewBox="0 0 16 16"><path d="M.6 .6h6v5.500h-6zM7.500 10l3.500 5.500H4z" class="w" stroke-width="1.200"/><circle cx="12.500" cy="6.500" r="3" class="w" stroke-width="1.200"/></symbol>
<symbol id="perf" viewBox="0 0 16 16"><circle cx="9" cy="7" r="6.500" fill="#2f63b8"/><path d="M3 0v8M0 3h8" class="w"/><path d="M0 9h6v6H0z" fill="#f0bb3c"/><path d="M7 11l3 4 6-8" fill="none" stroke="#56a85c" stroke-width="2"/></symbol>
<symbol id="full" viewBox="0 0 16 16"><path d="M.6 2h14.800v12H.6z" class="w" stroke-width="1.200"/><path d="M9 4h4v4M3 8v4h4M13 4L9.500 7.500M3 12l3.500-3.500" class="w" stroke-width="1.300"/></symbol>
<symbol id="burger" viewBox="0 0 16 16"><path d="M0 2h16M0 8h16M0 14h16" stroke="#e4e6ea" stroke-width="2"/></symbol>

<symbol id="valve" viewBox="0 0 78 40" overflow="visible"><path d="M.5.5L77 39V.5L.5 39zM38.500 0v39" fill="none" stroke="#fff"/></symbol>
<symbol id="gauge" viewBox="0 0 58 58" overflow="visible"><path d="M29 .5l-20 9-8.500 19.500 8.500 20 20 8.500 20-8.500 8.500-20-8.500-19.500z" fill="none" stroke="#fff"/></symbol>
<symbol id="needle" viewBox="0 0 58 58" overflow="visible"><use href="#gauge" width="58" height="58"/><path d="M13 45.500l32-32-18.500 9M29 57.500v28" fill="none" stroke="#fff"/></symbol>
<symbol id="strainer" viewBox="0 0 76 60" overflow="visible"><path d="M.5 0v39M75.500 0v39M.5 14.500h75M.5 25.500H24l26.500 27M75.500 25.500H39.500L58 44M44 58.500l21-20" fill="none" stroke="#fff"/></symbol>
</svg>

<div class="window">
<header class="titlebar">
  <button class="app" aria-label="应用程序菜单"><svg class="i16"><use href="#logo"/></svg><svg class="c8"><use href="#caret"/></svg></button>
  <div class="quick">
    <button class="q" aria-label="新建"><svg class="i16"><use href="#new"/></svg></button>
    <button class="q" aria-label="打开"><svg class="i16"><use href="#open"/></svg></button>
    <button class="q" aria-label="保存"><svg class="i16"><use href="#save"/></svg></button>
    <button class="q" aria-label="另存为"><svg class="i16"><use href="#saveas"/></svg></button>
    <button class="q" aria-label="从移动设备打开"><svg class="i16"><use href="#openm"/></svg></button>
    <button class="q" aria-label="保存到移动设备"><svg class="i16"><use href="#savem"/></svg></button>
    <button class="q" aria-label="打印"><svg class="i16"><use href="#print"/></svg></button>
    <button class="q" aria-label="放弃"><svg class="i16"><use href="#undo"/></svg></button>
    <button class="car" aria-label="放弃列表"><svg class="c8"><use href="#caret"/></svg></button>
    <button class="q dim" aria-label="重做"><svg class="i16"><use href="#redo"/></svg></button>
    <button class="car dim" aria-label="重做列表"><svg class="c8"><use href="#caret"/></svg></button>
    <button class="car wide" aria-label="自定义快速访问"><svg class="c10"><use href="#caretbar"/></svg></button>
    <button class="share"><svg class="i16"><use href="#plane"/></svg>共享</button>
  </div>
  <h1 class="caption"><span>Autodesk AutoCAD 2022</span><span>住宅楼地暖设计全套图.dwg</span></h1>
  <div class="infocenter">
    <svg class="play" viewBox="0 0 6 8"><path d="M0 0l5 4-5 4z" fill="#e4e6ea"/></svg>
    <input class="search" type="text" placeholder="键入关键字或短语" aria-label="搜索">
    <button class="q" aria-label="搜索"><svg class="i16"><use href="#mag"/></svg></button>
    <button class="account"><svg class="i16"><use href="#user"/></svg><span>1505999135...</span><svg class="c8"><use href="#caret"/></svg></button>
    <button class="q" aria-label="购物车"><svg class="i14"><use href="#cart"/></svg></button>
    <button class="q" aria-label="Autodesk App Store"><svg class="i16"><use href="#adsk"/></svg></button>
    <button class="car" aria-label="应用列表"><svg class="c8"><use href="#caret"/></svg></button>
    <span class="vline"></span>
    <button class="q" aria-label="帮助"><svg class="i16"><use href="#help"/></svg></button>
    <button class="car" aria-label="帮助列表"><svg class="c8"><use href="#caret"/></svg></button>
  </div>
  <div class="wincontrols">
    <button aria-label="最小化"><svg class="c12"><use href="#min"/></svg></button>
    <button aria-label="最大化"><svg class="c12"><use href="#max"/></svg></button>
    <button aria-label="关闭"><svg class="c12"><use href="#close"/></svg></button>
  </div>
</header>
<nav class="menubar">
  <a href="#">文件(F)</a><a href="#">编辑(E)</a><a href="#">视图(V)</a><a href="#">插入(I)</a><a href="#">格式(O)</a><a href="#">工具(T)</a><a href="#">绘图(D)</a><a href="#">标注(N)</a><a href="#">修改(M)</a><a href="#">参数(P)</a><a href="#">窗口(W)</a><a href="#">帮助(H)</a><a href="#">Express</a>
  <div class="doccontrols">
    <button aria-label="最小化图形"><svg class="c12"><use href="#min"/></svg></button>
    <button aria-label="还原图形"><svg class="c12"><use href="#restore"/></svg></button>
    <button aria-label="关闭图形"><svg class="c12"><use href="#close"/></svg></button>
  </div>
</nav>
<div class="filetabs">
  <button class="ftab start">开始</button>
  <div class="ftab active"><button class="ftitle">住宅楼地暖设计全套图*</button><button aria-label="关闭选项卡"><svg class="c10"><use href="#x"/></svg></button></div>
  <button class="ftab add" aria-label="新图形"><svg class="c10"><use href="#plus"/></svg></button>
</div>

<div class="toolbars">
  <div class="tbrow">
    <div class="toolbar">
      <i class="grip"></i>
      <button class="t" aria-label="新建"><svg class="i16"><use href="#new"/></svg></button>
      <button class="t" aria-label="打开"><svg class="i16"><use href="#open"/></svg></button>
      <button class="t" aria-label="保存"><svg class="i16"><use href="#save"/></svg></button>
      <i class="sep"></i>
      <button class="t" aria-label="打印"><svg class="i16"><use href="#print"/></svg></button>
      <button class="t" aria-label="打印预览"><svg class="i16"><use href="#preview"/></svg></button>
      <button class="t" aria-label="发布"><svg class="i16"><use href="#publish"/></svg></button>
      <button class="t" aria-label="三维打印"><svg class="i16"><use href="#globe"/></svg></button>
      <i class="sep"></i>
      <button class="t" aria-label="剪切"><svg class="i16"><use href="#cut"/></svg></button>
      <button class="t" aria-label="复制"><svg class="i16"><use href="#copy"/></svg></button>
      <button class="t" aria-label="粘贴"><svg class="i16"><use href="#paste"/></svg></button>
      <button class="t" aria-label="特性匹配"><svg class="i16"><use href="#match"/></svg></button>
      <button class="t" aria-label="块编辑器"><svg class="i16"><use href="#bedit"/></svg></button>
      <i class="sep"></i>
      <button class="t" aria-label="放弃"><svg class="i16"><use href="#undo"/></svg></button>
      <button class="tc" aria-label="放弃列表"><svg class="c8"><use href="#caret"/></svg></button>
      <button class="t" aria-label="重做"><svg class="i16"><use href="#redo"/></svg></button>
      <button class="tc" aria-label="重做列表"><svg class="c8"><use href="#caret"/></svg></button>
      <i class="sep"></i>
      <button class="t" aria-label="平移"><svg class="i16"><use href="#hand"/></svg></button>
      <button class="t" aria-label="实时缩放"><svg class="i16"><use href="#zoomrt"/></svg></button>
      <button class="t" aria-label="窗口缩放"><svg class="i16"><use href="#zoomw"/></svg></button>
      <button class="t" aria-label="缩放上一个"><svg class="i16"><use href="#zoomp"/></svg></button>
      <i class="sep"></i>
      <button class="t" aria-label="特性"><svg class="i16"><use href="#props"/></svg></button>
      <button class="t" aria-label="设计中心"><svg class="i16"><use href="#dcenter"/></svg></button>
      <button class="t" aria-label="工具选项板"><svg class="i16"><use href="#palette"/></svg></button>
      <button class="t" aria-label="图纸集"><svg class="i16"><use href="#sheets"/></svg></button>
      <button class="t" aria-label="标记集"><svg class="i16"><use href="#markup"/></svg></button>
      <button class="t" aria-label="计算器"><svg class="i16"><use href="#calc"/></svg></button>
      <i class="sep"></i>
      <button class="t" aria-label="帮助"><svg class="i16"><use href="#help"/></svg></button>
    </div>
    <div class="toolbar">
      <i class="grip"></i>
      <button class="t" aria-label="图层特性"><svg class="i16"><use href="#layers"/></svg></button>
      <div class="combo layer"><svg class="i16"><use href="#bulb"/></svg><svg class="i16"><use href="#sun"/></svg><svg class="i16 sp"><use href="#vpfrz"/></svg><svg class="i16"><use href="#unlock"/></svg><i class="swatch"></i><select aria-label="图层"><option>HP_HG</option></select><svg class="c8"><use href="#chev"/></svg></div>
      <button class="t" aria-label="置为当前图层"><svg class="i16"><use href="#laycur"/></svg></button>
      <button class="t" aria-label="上一个图层"><svg class="i16"><use href="#layprev"/></svg></button>
      <button class="t" aria-label="图层状态"><svg class="i16"><use href="#laystate"/></svg></button>
    </div>
    <div class="toolbar">
      <i class="grip"></i>
      <div class="combo color"><i class="swatch"></i><select aria-label="颜色"><option>ByLayer</option></select><svg class="c8"><use href="#chev"/></svg></div>
      <i class="sep"></i>
      <div class="combo ltype"><svg class="dash" viewBox="0 0 60 2"><path d="M0 .5h60" stroke="#000" stroke-dasharray="7 3"/></svg><select aria-label="线型"><option>ByLayer</option></select><svg class="c8"><use href="#chev"/></svg></div>
      <i class="sep"></i>
      <div class="combo lweight"><svg class="solid" viewBox="0 0 35 2"><path d="M0 .5h35" stroke="#000"/></svg><select aria-label="线宽"><option>ByLayer</option></select><svg class="c8"><use href="#chev"/></svg></div>
      <i class="sep"></i>
      <div class="combo pstyle"><select aria-label="打印样式" disabled><option>ByColor</option></select><svg class="c8"><use href="#chev"/></svg></div>
    </div>
  </div>
  <div class="tbrow">
    <div class="toolbar">
      <i class="grip"></i>
      <button class="t" aria-label="编辑参照"><svg class="i16"><use href="#bookedit"/></svg></button>
      <button class="t" aria-label="保存参照"><svg class="i16"><use href="#bookok"/></svg></button>
      <button class="t" aria-label="图层删除"><svg class="i16"><use href="#layerdel"/></svg></button>
    </div>
    <div class="toolbar">
      <i class="grip"></i>
      <button class="t" aria-label="线性"><svg class="i16"><use href="#dlin"/></svg></button>
      <button class="t" aria-label="对齐"><svg class="i16"><use href="#dali"/></svg></button>
      <button class="t" aria-label="弧长"><svg class="i16"><use href="#darc"/></svg></button>
      <button class="t" aria-label="坐标"><svg class="i16"><use href="#dord"/></svg></button>
      <i class="sep"></i>
      <button class="t" aria-label="半径"><svg class="i16"><use href="#drad"/></svg></button>
      <button class="t" aria-label="折弯"><svg class="i16"><use href="#djog"/></svg></button>
      <button class="t" aria-label="直径"><svg class="i16"><use href="#ddia"/></svg></button>
      <button class="t" aria-label="角度"><svg class="i16"><use href="#dang"/></svg></button>
      <i class="sep"></i>
      <button class="t" aria-label="快速标注"><svg class="i16"><use href="#dquick"/></svg></button>
      <button class="t" aria-label="基线"><svg class="i16"><use href="#dbase"/></svg></button>
      <button class="t" aria-label="连续"><svg class="i16"><use href="#dcont"/></svg></button>
      <button class="t" aria-label="等距标注"><svg class="i16"><use href="#dspace"/></svg></button>
      <button class="t" aria-label="折断标注"><svg class="i16"><use href="#dbreak"/></svg></button>
      <i class="sep"></i>
      <button class="t" aria-label="公差"><svg class="i16"><use href="#tol"/></svg></button>
      <button class="t" aria-label="圆心标记"><svg class="i16"><use href="#cmark"/></svg></button>
      <button class="t" aria-label="检验"><svg class="i16"><use href="#dinsp"/></svg></button>
      <button class="t" aria-label="折弯线性"><svg class="i16"><use href="#jogl"/></svg></button>
      <i class="sep"></i>
      <button class="t" aria-label="编辑标注"><svg class="i16"><use href="#dedit"/></svg></button>
      <button class="t" aria-label="编辑标注文字"><svg class="i16"><use href="#dtext"/></svg></button>
      <button class="t" aria-label="标注更新"><svg class="i16"><use href="#dupd"/></svg></button>
      <i class="sep"></i>
      <div class="combo dimstyle"><select aria-label="标注样式"><option>NORMAL</option></select><svg class="c8"><use href="#chev"/></svg></div>
      <button class="t" aria-label="标注样式管理"><svg class="i16"><use href="#dstyle"/></svg></button>
    </div>
    <div class="toolbar">
      <i class="grip"></i>
      <button class="t" aria-label="并集"><svg class="i16"><use href="#union"/></svg></button>
      <button class="t" aria-label="差集"><svg class="i16"><use href="#subtract"/></svg></button>
      <button class="t" aria-label="交集"><svg class="i16"><use href="#intersect"/></svg></button>
      <i class="sep"></i>
      <button class="t" aria-label="拉伸面"><svg class="i16"><use href="#extrudef"/></svg></button>
      <button class="t" aria-label="移动面"><svg class="i16"><use href="#movef"/></svg></button>
      <button class="t" aria-label="偏移面"><svg class="i16"><use href="#offsetf"/></svg></button>
      <button class="t" aria-label="删除面"><svg class="i16"><use href="#delf"/></svg></button>
      <button class="t" aria-label="旋转面"><svg class="i16"><use href="#rotf"/></svg></button>
      <button class="t" aria-label="倾斜面"><svg class="i16"><use href="#taperf"/></svg></button>
      <button class="t" aria-label="复制面"><svg class="i16"><use href="#copyf"/></svg></button>
      <button class="t" aria-label="着色面"><svg class="i16"><use href="#colorf"/></svg></button>
      <i class="sep"></i>
      <button class="t" aria-label="圆角边"><svg class="i16"><use href="#fillete"/></svg></button>
      <button class="t" aria-label="倒角边"><svg class="i16"><use href="#chamfe"/></svg></button>
      <button class="t" aria-label="复制边"><svg class="i16"><use href="#copye"/></svg></button>
      <button class="t" aria-label="着色边"><svg class="i16"><use href="#colore"/></svg></button>
      <i class="sep"></i>
      <button class="t" aria-label="压印"><svg class="i16"><use href="#imprint"/></svg></button>
      <button class="t" aria-label="清除"><svg class="i16"><use href="#clean"/></svg></button>
      <button class="t" aria-label="分割"><svg class="i16"><use href="#separate"/></svg></button>
      <button class="t" aria-label="抽壳"><svg class="i16"><use href="#shell"/></svg></button>
      <button class="t" aria-label="检查"><svg class="i16"><use href="#check3d"/></svg></button>
    </div>
  </div>
</div>

<main class="work">
  <aside class="dock left">
    <div class="palette">
      <i class="hgrip"></i>
      <button aria-label="直线"><svg class="i16"><use href="#line"/></svg></button>
      <button aria-label="构造线"><svg class="i16"><use href="#xline"/></svg></button>
      <button aria-label="多段线"><svg class="i16"><use href="#pline"/></svg></button>
      <button aria-label="多边形"><svg class="i16"><use href="#polygon"/></svg></button>
      <button aria-label="矩形"><svg class="i16"><use href="#rect"/></svg></button>
      <button aria-label="圆弧"><svg class="i16"><use href="#arc"/></svg></button>
      <button aria-label="圆"><svg class="i16"><use href="#circle"/></svg></button>
      <button aria-label="修订云线"><svg class="i16"><use href="#cloud"/></svg></button>
      <button aria-label="样条曲线"><svg class="i16"><use href="#spline"/></svg></button>
      <button aria-label="椭圆"><svg class="i16"><use href="#ellipse"/></svg></button>
      <button aria-label="椭圆弧"><svg class="i16"><use href="#ellarc"/></svg></button>
      <button aria-label="插入块"><svg class="i16"><use href="#insert"/></svg></button>
      <button aria-label="创建块"><svg class="i16"><use href="#block"/></svg></button>
      <button aria-label="点"><svg class="i16"><use href="#point"/></svg></button>
      <button aria-label="图案填充"><svg class="i16"><use href="#hatch"/></svg></button>
      <button aria-label="渐变色"><svg class="i16"><use href="#gradient"/></svg></button>
      <button aria-label="面域"><svg class="i16"><use href="#region"/></svg></button>
      <button aria-label="表格"><svg class="i16"><use href="#table"/></svg></button>
      <button aria-label="多行文字"><svg class="i16"><use href="#mtext"/></svg></button>
      <button aria-label="添加选定对象"><svg class="i16"><use href="#addsel"/></svg></button>
    </div>
  </aside>
  <section class="canvas">
    <svg class="drawing" viewBox="33 133 1662 1103" role="img" aria-label="单元热力入口详图">
      <g fill="none" stroke="#00ff00" stroke-width="7">
        <path d="M544 526.500H764.500M841 526.500H970.500M1045.500 526.500H1088.500M1164.500 526.500H1250.500M1327 526.500H1403M724.500 530V588"/>
      </g>
      <g fill="none" stroke="#ff00ff" stroke-width="7">
        <path d="M547 708.500H764.500M841 708.500H919.500M1004.500 708.500H1028.500M1122.500 708.500H1250.500M1327 708.500H1404M724.500 662V709M1188.500 530V587H961.500V647" stroke-linejoin="round"/>
      </g>
      <path d="M609.500 516v22l46-11.500zM639.500 698v22l-45-11.500z" fill="#ff0000"/>
      <g fill="none" stroke="#f08080">
        <path d="M389 424.500H657.500L721 540M746 424.500H977L1012 529M1384 425.500H1165.500L1130 526"/>
      </g>
      <g fill="none" stroke="#fff">
        <use href="#valve" x="764" y="507" width="78" height="40"/>
        <use href="#valve" x="1250" y="507" width="78" height="40"/>
        <use href="#valve" x="764" y="689" width="78" height="40"/>
        <use href="#valve" x="1250" y="689" width="78" height="40"/>
        <path d="M706.500 587.500h37l-37 75h37zM706 624.500h38"/>
        <use href="#needle" x="898.500" y="441" width="58" height="58"/>
        <use href="#needle" x="1187.500" y="441" width="58" height="58"/>
        <use href="#needle" x="851.500" y="623" width="58" height="58"/>
        <use href="#needle" x="1123.500" y="623" width="58" height="58"/>
        <use href="#gauge" x="1046.500" y="623" width="58" height="58"/>
        <use href="#strainer" x="970" y="507" width="76" height="60"/>
        <use href="#strainer" x="1088" y="507" width="76" height="60"/>
        <path d="M850.500 490V441.500h38V490M869.500 479v48M1197.500 671V623.500h38V671M1216.500 661v48"/>
        <path d="M947.500 675.500v-28h28v28h-28l-28 10h85l-29-10M919.500 685.500v47h85v-47M919.500 685.500l85 47M1004.500 685.500l-85 47"/>
        <path d="M1028.500 689.500h94v38h-94zM1075.500 680v9"/>
      </g>
      <path d="M1403 503l-6.500 12.500 12.500 23-6.500 11.500M1404.500 685l-6.500 12.500 11.500 23.500-5 11" fill="none" stroke="#00e5e5"/>
      <path d="M538 953h852v12H538zM538 971h852v1H538z" fill="#fff"/>
      <text class="t-title" x="543" y="930">单元热力入口详图</text>
      <g class="t-cjk">
        <text class="s46" x="392" y="404">循环管</text>
        <text class="s46" x="928" y="401">目</text>
        <text class="s46" x="1185" y="402">孔径</text>
        <text class="s46" x="478" y="548">供</text>
        <text class="s46" x="479" y="732">回</text>
        <text class="s58" x="176" y="660">接室外管网</text>
        <text class="s46" x="747" y="1034">详甘</text>
      </g>
      <g class="t-roman">
        <text class="r58" x="533" y="415">DN32</text>
        <text class="r66" x="753" y="414">40~60</text>
        <text class="r66" x="1276" y="414">ø3mm</text>
        <text class="r68" x="841" y="1047">02N1-22</text>
      </g>
      <text class="t-r" x="1075" y="667">R</text>
      <g fill="none" stroke="#fff">
        <path d="M1608.500 133v1053M1608.500 1199v37M33 1192.500h1569M1615 1192.500h80M1602.500 1186.500h12v12h-12z"/>
        <path d="M55.500 1204.500h9v9h-9zM59.500 1160v49.500h50"/>
      </g>
      <text class="axis" x="61" y="1155">Y</text>
      <text class="axis" x="114" y="1208">X</text>
    </svg>
    <div class="viewlabel">[−][俯视][二维线框]</div>
    <div class="viewcube">
      <svg viewBox="0 -6 136 146" class="cube">
        <circle cx="68" cy="67" r="54" fill="none" stroke="#7a7e86" stroke-opacity=".4" stroke-width="13"/>
        <path d="M42 41h52v51H42z" fill="#a6a7aa"/><path d="M52 51h32v32H52z" fill="#9a9ea8"/>
        <text class="top" x="68" y="77">上</text>
        <path d="M64.500 41v51" stroke="#6d6f73"/>
        <text x="68" y="19">北</text><text x="11" y="75">西</text><text x="125" y="75">东</text><text x="68" y="132">南</text>
      </svg>
      <button class="wcs">WCS<svg viewBox="0 0 8 6"><path d="M1 1h6L4 5z" fill="none" stroke="#b8bac4"/></svg></button>
    </div>
  </section>
  <aside class="dock right">
    <div class="palette">
      <i class="hgrip"></i>
      <button aria-label="删除"><svg class="i16"><use href="#erase"/></svg></button>
      <button aria-label="复制"><svg class="i16"><use href="#copyobj"/></svg></button>
      <button aria-label="镜像"><svg class="i16"><use href="#mirror"/></svg></button>
      <button aria-label="偏移"><svg class="i16"><use href="#offset"/></svg></button>
      <button aria-label="阵列"><svg class="i16"><use href="#array"/></svg></button>
      <button aria-label="移动"><svg class="i16"><use href="#move"/></svg></button>
      <button aria-label="旋转"><svg class="i16"><use href="#rotate"/></svg></button>
      <button aria-label="缩放"><svg class="i16"><use href="#scale"/></svg></button>
      <button aria-label="拉伸"><svg class="i16"><use href="#stretch"/></svg></button>
      <button aria-label="修剪"><svg class="i16"><use href="#trim"/></svg></button>
      <button aria-label="延伸"><svg class="i16"><use href="#extend"/></svg></button>
      <button aria-label="打断于点"><svg class="i16"><use href="#breakpt"/></svg></button>
      <button aria-label="打断"><svg class="i16"><use href="#break"/></svg></button>
      <button aria-label="合并"><svg class="i16"><use href="#join"/></svg></button>
      <button aria-label="倒角"><svg class="i16"><use href="#chamfer"/></svg></button>
      <button aria-label="圆角"><svg class="i16"><use href="#fillet"/></svg></button>
      <button aria-label="光顺曲线"><svg class="i16"><use href="#blend"/></svg></button>
      <button aria-label="分解"><svg class="i16"><use href="#explode"/></svg></button>
    </div>
  </aside>
</main>

<section class="command">
  <div class="handle">
    <i class="hgrip"></i>
    <button aria-label="关闭命令行"><svg class="c10"><use href="#x"/></svg></button>
    <button aria-label="自定义"><svg class="i14"><use href="#wrench"/></svg></button>
  </div>
  <div class="lines">
    <p class="history">选择注释对象或<span> [</span>放弃<span>(U)/</span>模式<span>(M)]: *</span>取消<span>*</span></p>
    <div class="entry"><svg class="prompt"><use href="#prompt"/></svg><svg class="c8 gray"><use href="#caret"/></svg><input type="text" placeholder="键入命令" aria-label="命令"></div>
  </div>
</section>

<footer class="status">
  <div class="layouts">
    <button class="ltab on">模型</button><button class="ltab">布局1</button><button class="ltab ladd" aria-label="新建布局"><svg class="c10"><use href="#plus"/></svg></button>
  </div>
  <div class="modes">
    <div class="grp g3"><button class="model">模型</button></div>
    <div class="grp g3"><button class="m" aria-label="栅格"><svg class="i16"><use href="#grid"/></svg></button><button class="m" aria-label="捕捉"><svg class="i16"><use href="#snap"/></svg></button><button class="mc" aria-label="捕捉设置"><svg class="c8"><use href="#caret"/></svg></button></div>
    <div class="grp g1"><button class="m" aria-label="正交"><svg class="i16"><use href="#ortho"/></svg></button><button class="m" aria-label="极轴"><svg class="i16"><use href="#polar"/></svg></button><button class="mc" aria-label="极轴设置"><svg class="c8"><use href="#caret"/></svg></button><button class="m" aria-label="等轴测"><svg class="i16"><use href="#iso"/></svg></button><button class="mc" aria-label="等轴测设置"><svg class="c8"><use href="#caret"/></svg></button></div>
    <div class="grp g1"><button class="m" aria-label="对象捕捉追踪"><svg class="i16"><use href="#otrack"/></svg></button><button class="m on" aria-label="对象捕捉"><svg class="i16"><use href="#osnap"/></svg></button><button class="mc" aria-label="捕捉列表"><svg class="c8"><use href="#caret"/></svg></button></div>
    <div class="grp g3"><button class="m" aria-label="线宽"><svg class="i16"><use href="#lweight"/></svg></button></div>
    <div class="grp g3"><button class="m on" aria-label="注释可见性"><svg class="i16"><use href="#annovis"/></svg></button><button class="m" aria-label="自动缩放"><svg class="i16"><use href="#annoauto"/></svg></button><button class="m" aria-label="注释比例"><svg class="i16"><use href="#anno"/></svg></button><button class="ratio">1:1<svg class="c8"><use href="#caret"/></svg></button></div>
    <div class="grp g1"><button class="m" aria-label="工作空间"><svg class="i14"><use href="#gear"/></svg></button><button class="mc" aria-label="工作空间列表"><svg class="c8"><use href="#caret"/></svg></button></div>
    <div class="grp g3"><button class="m" aria-label="注释监视器"><svg class="i16"><use href="#monitor"/></svg></button></div>
    <div class="grp g3"><button class="m" aria-label="隔离对象"><svg class="i16"><use href="#isolate"/></svg></button></div>
    <div class="grp g3"><button class="m" aria-label="图形性能"><svg class="i16"><use href="#perf"/></svg></button></div>
    <div class="grp"><button class="m" aria-label="全屏显示"><svg class="i16"><use href="#full"/></svg></button><button class="m" aria-label="自定义"><svg class="i16"><use href="#burger"/></svg></button></div>
  </div>
</footer>
</div>
</body>
</html>
```
FILE: styles.css
```css
* { box-sizing: border-box; }

body {
  margin: 0;
  background: #212830;
  color: #c9ccd1;
  font: 12px/16px "Noto Sans", "Noto Sans CJK SC", sans-serif;
}

button, input, select {
  margin: 0;
  padding: 0;
  border: 0;
  background: none;
  color: inherit;
  font: inherit;
}

button {
  display: flex;
  align-items: center;
  justify-content: center;
}

svg { display: block; flex: none; }
.sprite { display: none; }
.i16 { width: 16px; height: 16px; }
.i14 { width: 14px; height: 14px; }
.c12 { width: 12px; height: 12px; }
.c10 { width: 10px; height: 10px; }
.c8 { width: 8px; height: 8px; }

/* icon paint */
.w { fill: none; stroke: #dfe2e6; }
.b { fill: none; stroke: #7cc0ee; }
.d { fill: none; stroke: #4a5261; }
.fw { fill: #d9dce0; }
.fs { fill: #b9bdc3; }
.fb { fill: #82c4f2; }

.window {
  display: flex;
  flex-direction: column;
  height: 100vh;
  border: 1px solid #1c84a8;
}

/* title bar */
.titlebar {
  display: flex;
  align-items: center;
  height: 27px;
  padding-left: 8px;
}
.app { gap: 4px; width: 41px; justify-content: flex-start; }
.quick, .infocenter, .wincontrols, .doccontrols { display: flex; align-items: center; }
.q { width: 24px; height: 24px; }
.car { width: 12px; height: 24px; }
.car.wide { width: 16px; }
.dim { opacity: .4; }
.share { gap: 5px; padding-left: 4px; color: #8fcbf3; }
.caption {
  display: flex;
  flex: 1;
  justify-content: center;
  gap: 20px;
  margin: 0;
  color: #f0f1f3;
  font-size: 12px;
  font-weight: 400;
}
.play { width: 6px; height: 8px; margin-right: 6px; }
.search {
  width: 178px;
  height: 20px;
  padding-left: 3px;
  background: #454f61;
  font-style: italic;
}
.search::placeholder { color: #b6bac2; opacity: 1; }
.account { gap: 5px; padding: 0 5px; color: #e4e6ea; }
.vline { width: 1px; height: 18px; margin: 0 4px 0 6px; background: #4a515c; }
.wincontrols { margin-left: 60px; padding-right: 3px; }
.wincontrols button { width: 25px; height: 24px; }

/* menu bar */
.menubar {
  display: flex;
  align-items: center;
  height: 21px;
  padding: 2px 0 0 5px;
  border-bottom: 1px solid #3d444f;
}
.menubar a { padding: 0 13px 0 12px; color: #b4b8be; text-decoration: none; white-space: nowrap; }
.doccontrols { margin-left: auto; padding-right: 2px; }
.doccontrols button { width: 18px; height: 18px; }

/* drawing file tabs */
.filetabs {
  display: flex;
  align-items: flex-end;
  height: 25px;
  padding-left: 23px;
}
.ftab { height: 22px; background: #2f3745; color: #d3d5d9; }
.ftab.start { width: 123px; justify-content: flex-start; padding-left: 12px; border-radius: 8px 8px 0 0; }
.ftab.active {
  display: flex;
  align-items: center;
  gap: 8px;
  width: 176px;
  padding-left: 12px;
  border-radius: 8px 8px 0 0;
  background: #3b4453;
}
.ftitle { color: #fff; font-weight: 700; white-space: nowrap; }
.ftab.add { width: 20px; border-radius: 4px 10px 4px 4px; background: #2b323d; }

/* toolbars */
.toolbars {
  display: flex;
  flex-direction: column;
  gap: 4px;
  margin: 0 3px;
  padding: 4px 0 5px;
  background: #3b4453;
}
.tbrow { display: flex; gap: 1px; }
.toolbar {
  display: flex;
  align-items: center;
  height: 23px;
  box-shadow: inset 0 0 0 1px #2c3440;
}
.grip {
  width: 3px;
  height: 15px;
  margin: 0 3px;
  background: repeating-conic-gradient(#aab0ba 0 25%, transparent 0 50%) 0 0 / 2px 2px;
}
.t { width: 23px; height: 23px; }
.tc { width: 13px; height: 23px; }
.sep {
  width: 2px;
  height: 18px;
  margin: 0 2px;
  background: linear-gradient(90deg, #12161c 50%, #e8eaee 50%);
}
.combo {
  display: flex;
  align-items: center;
  height: 22px;
  padding-right: 4px;
  background: #fdfdfd;
  color: #111;
}
.combo select {
  flex: 1;
  min-width: 0;
  height: 20px;
  padding: 1px 0 0 5px;
  appearance: none;
  opacity: 1;
}
.combo .sp { margin: 0 4px; }
.swatch { width: 13px; height: 13px; border: 1px solid #000; background: #ffff00; }
.layer { width: 300px; padding-left: 4px; }
.layer .swatch { margin-left: 3px; }
.color { width: 150px; padding-left: 3px; }
.ltype { width: 159px; padding-left: 4px; }
.dash { width: 60px; height: 2px; }
.lweight { width: 125px; padding-left: 5px; }
.solid { width: 35px; height: 2px; }
.pstyle { width: 119px; padding-left: 5px; color: #808080; }
.pstyle .c8 { opacity: .5; }
.dimstyle { width: 120px; padding-left: 14px; }

/* work area */
.work { display: flex; flex: 1; min-height: 0; margin: 0 3px; background: #3b4453; }
.dock.left { width: 29px; }
.dock.right { width: 32px; padding-left: 4px; }
.palette {
  display: flex;
  flex-direction: column;
  align-items: center;
  width: 24px;
  padding-bottom: 1px;
  box-shadow: inset 0 0 0 1px #2c3440;
}
.hgrip {
  width: 15px;
  height: 3px;
  margin: 3px 0;
  background: repeating-conic-gradient(#c3c8d0 0 25%, transparent 0 50%) 0 0 / 2px 2px;
}
.palette button { width: 24px; height: 22px; }
.canvas { position: relative; display: flex; flex: 1; min-width: 0; background: #212830; }
.drawing { flex: 1; min-width: 0; }

.t-title { fill: #00ff00; font: 400 104px "Noto Sans CJK SC", sans-serif; }
.t-cjk { fill: #f08080; font-family: "Noto Sans CJK SC", sans-serif; font-weight: 100; }
.s46 { font-size: 46px; }
.s58 { font-size: 58px; }
.t-roman { fill: none; stroke: #f08080; font-family: "Liberation Serif", serif; }
.r58 { font-size: 58px; }
.r66 { font-size: 66px; }
.r68 { font-size: 68px; }
.t-r { fill: none; stroke: #fff; font: 46px "Liberation Serif", serif; text-anchor: middle; }
.axis { fill: #fff; font: 200 18px Inter, "Liberation Sans", sans-serif; }

.viewlabel { position: absolute; top: 5px; left: 3px; color: #000; font-size: 12px; }
.viewcube {
  position: absolute;
  top: 9px;
  right: 15px;
  display: flex;
  flex-direction: column;
  align-items: center;
  gap: 14px;
}
.cube { width: 136px; height: 146px; }
.cube text { fill: #a9aaa6; font: 19px "Noto Sans CJK SC", sans-serif; text-anchor: middle; }
.cube .top { fill: #5c5f66; font-size: 28px; }
.wcs {
  gap: 6px;
  width: 48px;
  height: 18px;
  border: 1px solid #a2a4b0;
  border-radius: 3px;
  background: #8b8d9a;
  color: #4d515e;
}
.wcs svg { width: 8px; height: 6px; }

/* command line */
.command {
  display: flex;
  margin: 0 3px;
  border-top: 2px solid #3d434d;
}
.handle {
  display: flex;
  flex-direction: column;
  align-items: center;
  gap: 6px;
  width: 25px;
  padding: 1px 3px 0 0;
  background: #2b323d;
}
.handle button:last-child { margin-top: 6px; }
.lines { flex: 1; padding-top: 1px; }
.history {
  height: 29px;
  margin: 0;
  padding: 0 3px;
  background: #c8c8c8;
  color: #111;
  font: 18px/29px "Noto Sans CJK SC", sans-serif;
  white-space: pre;
}
.history span { font: 16px/20px "DejaVu Sans Mono", monospace; }
.entry {
  display: flex;
  align-items: center;
  height: 24px;
  margin-top: 1px;
  padding-left: 4px;
  background: #fff;
}
.prompt { width: 16px; height: 12px; margin-right: 2px; }
.gray { filter: brightness(.5); }
.entry input {
  flex: 1;
  height: 24px;
  padding: 0 0 2px 7px;
  color: #111;
  font: italic 18px/22px "Noto Sans CJK SC", sans-serif;
}
.entry input::placeholder { color: #858585; opacity: 1; }

/* status bar */
.status {
  display: flex;
  justify-content: space-between;
  height: 33px;
  margin: 0 3px;
  border-top: 1px solid #3d434d;
}
.layouts { display: flex; gap: 2px; padding-left: 10px; }
.ltab {
  width: 52px;
  height: 18px;
  border-radius: 0 0 12px 12px;
  background: #2b323d;
  color: #b4b8be;
}
.ltab.on { width: 50px; background: #3b4453; color: #fff; font-weight: 700; }
.ltab.ladd { width: 24px; }
.modes { display: flex; padding: 2px 2px 0 0; }
.grp { display: flex; height: 24px; background: #3b4453; }
.g3 { margin-right: 3px; }
.g1 { margin-right: 1px; }
.grp button { height: 24px; color: #f0f1f3; }
.m { width: 24px; }
.m.on { background: #5f8fc6; }
.mc { width: 16px; }
.model { width: 30px; }
.ratio { gap: 4px; width: 32px; }
```
